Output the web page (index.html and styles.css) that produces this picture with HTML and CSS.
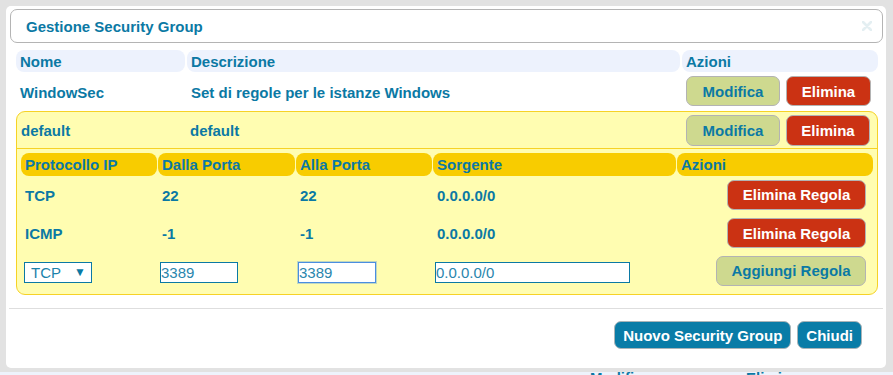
FILE: index.html
```html
<!DOCTYPE html>
<html lang="it">
<head>
    <meta charset="UTF-8">
    <meta name="viewport" content="width=device-width, initial-scale=1.0">
    <title>Gestione Security Group</title>
    <link rel="stylesheet" href="styles.css">
</head>
<body>
    <div class="dialog">
        <div class="titlebar">
            <span class="title">Gestione Security Group</span>
            <svg class="close" width="10" height="10" viewBox="0 0 10 10">
                <path d="M1 1L9 9M9 1L1 9" stroke="#e4eff2" stroke-width="2.6" stroke-linecap="round"/>
            </svg>
        </div>

        <div class="content">
            <div class="sg-grid head">
                <div class="th">Nome</div>
                <div class="th">Descrizione</div>
                <div class="th">Azioni</div>
            </div>

            <div class="sg-grid sg-row">
                <div class="td">WindowSec</div>
                <div class="td">Set di regole per le istanze Windows</div>
                <div class="actions">
                    <button class="btn btn-edit">Modifica</button>
                    <button class="btn btn-del">Elimina</button>
                </div>
            </div>

            <div class="group">
                <div class="sg-grid sg-row group-row">
                    <div class="td">default</div>
                    <div class="td">default</div>
                    <div class="actions">
                        <button class="btn btn-edit">Modifica</button>
                        <button class="btn btn-del">Elimina</button>
                    </div>
                </div>

                <div class="rules head rules-head">
                    <div class="th">Protocollo IP</div>
                    <div class="th">Dalla Porta</div>
                    <div class="th">Alla Porta</div>
                    <div class="th">Sorgente</div>
                    <div class="th">Azioni</div>
                </div>

                <div class="rules rule-row">
                    <div class="td">TCP</div>
                    <div class="td">22</div>
                    <div class="td">22</div>
                    <div class="td">0.0.0.0/0</div>
                    <div class="rule-action"><button class="btn btn-del btn-rule">Elimina Regola</button></div>
                </div>
                <div class="rules rule-row mid">
                    <div class="td">ICMP</div>
                    <div class="td">-1</div>
                    <div class="td">-1</div>
                    <div class="td">0.0.0.0/0</div>
                    <div class="rule-action"><button class="btn btn-del btn-rule">Elimina Regola</button></div>
                </div>
                <div class="rules rule-row last">
                    <div class="field">
                        <label class="select">
                            <select>
                                <option>TCP</option>
                                <option>UDP</option>
                                <option>ICMP</option>
                            </select>
                            <span class="arrow">&#9660;</span>
                        </label>
                    </div>
                    <div class="field"><input class="port" type="text" value="3389"></div>
                    <div class="field"><input class="port focus" type="text" value="3389"></div>
                    <div class="field"><input class="cidr" type="text" value="0.0.0.0/0"></div>
                    <div class="rule-action"><button class="btn btn-edit btn-add">Aggiungi Regola</button></div>
                </div>
            </div>
        </div>

        <div class="footer">
            <button class="btn btn-blue">Nuovo Security Group</button>
            <button class="btn btn-blue">Chiudi</button>
        </div>
    </div>

    <div class="under">
        <span class="under-a">Modifica</span>
        <span class="under-b">Elimina</span>
    </div>
</body>
</html>
```

FILE: styles.css
```css
*{
    margin: 0;
    padding: 0;
    box-sizing: border-box;
}
body{
    background-color: #e2e2e2;
    font-family: "Liberation Sans", Arial, sans-serif;
    font-size: 15px;
    color: #0b79a4;
    overflow: hidden;
}
.dialog{
    width: 880px;
    margin: 6px 0 0 6px;
    background-color: #fff;
    border-radius: 5px;
    padding: 3px 0 19px 0;
}
.titlebar{
    height: 34px;
    margin: 0 3px 0 4px;
    border: 1px solid #b4b4b4;
    border-radius: 7px;
    display: flex;
    align-items: center;
    justify-content: space-between;
    padding: 0 10px 0 15px;
}
.title{
    font-weight: bold;
}
.content{
    padding: 7px 8px 0 10px;
}
.head .th{
    font-weight: bold;
    padding-left: 4px;
    display: flex;
    align-items: center;
    border-radius: 8px;
}
.sg-grid{
    display: grid;
    grid-template-columns: 169px 493px 196px;
    column-gap: 2px;
}
.sg-grid.head{
    height: 22px;
}
.sg-grid.head .th{
    background-color: #edf2fd;
}
.sg-row{
    height: 38px;
    align-items: center;
}
.td{
    font-weight: bold;
    padding-left: 4px;
}
.sg-row .td{
    padding-top: 2px;
}
.actions{
    display: flex;
    gap: 6px;
    padding-left: 4px;
}
.btn{
    font-family: "Liberation Sans", Arial, sans-serif;
    font-size: 15px;
    font-weight: bold;
    border-radius: 7px;
    border: 1px solid #b3b3b3;
    height: 30px;
    cursor: pointer;
}
.btn-edit{
    width: 94px;
    background-color: #ced98f;
    color: #0b79a4;
}
.btn-del{
    width: 85px;
    background-color: #cb3213;
    color: #fff;
}

.group{
    margin-top: 1px;
    background-color: #fffdb1;
    border: 1px solid #f6d226;
    border-radius: 9px;
    padding: 0 4px 6px 4px;
}
.group-row{
    grid-template-columns: 167px 493px 195px;
    height: 37px;
    margin: 0 -4px;
    border-bottom: 1px solid #f6d226;
}
.group-row .td{
    padding-top: 0;
}
.group-row .actions{
    padding-left: 5px;
}
.group-row .btn{
    height: 31px;
}
.group-row .btn-del{
    width: 84px;
}

.rules{
    display: grid;
    grid-template-columns: 136px 137px 136px 243px 196px;
    column-gap: 1px;
}
.rules-head{
    margin-top: 4px;
    height: 23px;
}
.rules-head .th{
    background-color: #f8cc00;
}
.rule-row{
    height: 37px;
    align-items: center;
}
.rule-row.mid{
    height: 40px;
}
.rule-row.last{
    height: 35px;
}
.rule-row .td{
    padding-top: 1px;
}
.rule-action{
    display: flex;
    justify-content: flex-end;
    padding-right: 7px;
}
.btn-rule{
    width: 139px;
}
.btn-add{
    width: 150px;
}

.field{
    padding: 3px 0 0 2px;
}
.select{
    position: relative;
    display: block;
    width: 68px;
    margin-left: 1px;
}
.select select{
    appearance: none;
    -webkit-appearance: none;
    display: block;
    width: 68px;
    height: 21px;
    border: 1px solid #0b79a4;
    border-radius: 0;
    background-color: #fff;
    color: #1a82ab;
    font-family: "Liberation Sans", Arial, sans-serif;
    font-size: 15px;
    padding-left: 6px;
    outline: none;
}
.arrow{
    position: absolute;
    left: 50px;
    top: 3px;
    font-size: 12px;
    color: #0b79a4;
    pointer-events: none;
}
.port, .cidr{
    display: block;
    height: 21px;
    border: 1px solid #0b79a4;
    background-color: #fff;
    color: #2a86ad;
    font-family: "Liberation Sans", Arial, sans-serif;
    font-size: 15px;
    padding: 0;
    outline: none;
}
.port{
    width: 78px;
}
.cidr{
    width: 195px;
}
.focus{
    border-color: #4a8ee0;
    box-shadow: 0 0 0 1px rgba(74, 142, 224, 0.35);
}

.footer{
    margin: 13px 3px 0 3px;
    border-top: 1px solid #dedede;
    padding: 12px 21px 0 0;
    display: flex;
    justify-content: flex-end;
    gap: 6px;
}
.btn-blue{
    height: 28px;
    padding: 0 8px;
    background-color: #097ca7;
    color: #fff;
    border-color: #a9b4b8;
}

.under{
    margin-top: 4px;
    height: 10px;
    background-color: #eef3fc;
    position: relative;
}
.under span{
    position: absolute;
    top: -3px;
    font-weight: bold;
    color: #0b79a4;
}
.under-a{
    left: 590px;
}
.under-b{
    left: 746px;
}
```
